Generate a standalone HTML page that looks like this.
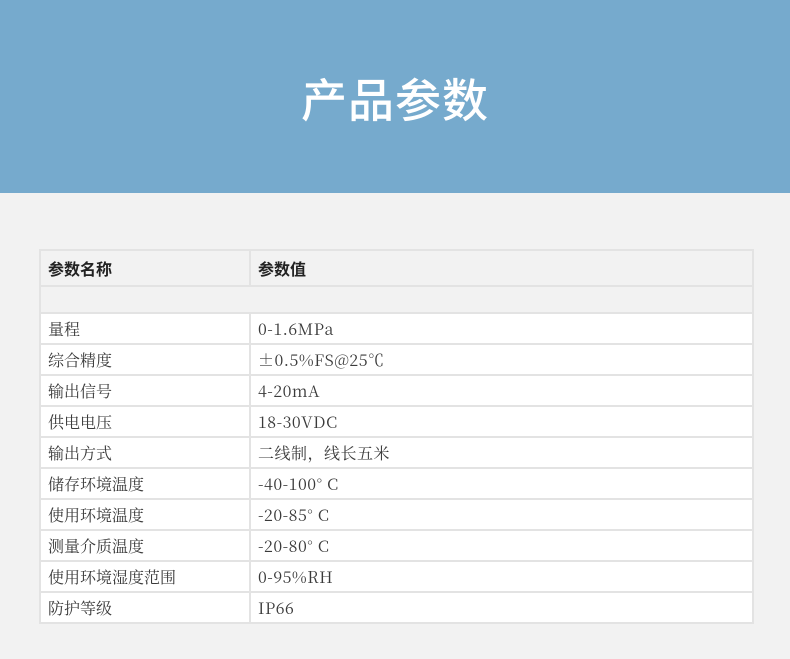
<!DOCTYPE html>
<html><head><meta charset="utf-8"><style>
html,body{margin:0;padding:0;width:790px;height:659px;background:#f2f2f2;overflow:hidden}
.top{height:193px;background:#76aacd;text-align:center;color:#fff;font-family:"Noto Sans CJK SC",sans-serif;font-size:46px;font-weight:500;line-height:196px;letter-spacing:1px}
table{position:absolute;left:39px;top:249px;width:715px;border-collapse:collapse;background:#fff;font-family:"Noto Serif CJK SC",serif;font-size:16px;color:#3a3a3a}
td{border:2px solid #e3e3e3;padding:0 0 0 7px;height:27px;box-sizing:border-box;white-space:pre}
td:first-child{width:210px}
td+td{letter-spacing:0.5px}
tr.h td{background:#f2f2f2;font-family:"Noto Sans CJK SC",sans-serif;font-weight:bold;height:36px;color:#222;letter-spacing:0}
tr.e td{background:#f2f2f2;height:27px}
tr.r td{height:31px}
</style></head><body>
<div class="top">产品参数</div>
<table>
<tr class="h"><td>参数名称</td><td>参数值</td></tr>
<tr class="e"><td colspan="2"></td></tr>
<tr class="r"><td>量程</td><td>0-1.6MPa</td></tr>
<tr class="r"><td>综合精度</td><td>±0.5%FS@25℃</td></tr>
<tr class="r"><td>输出信号</td><td>4-20mA</td></tr>
<tr class="r"><td>供电电压</td><td>18-30VDC</td></tr>
<tr class="r"><td>输出方式</td><td>二线制，线长五米</td></tr>
<tr class="r"><td>储存环境温度</td><td>-40-100° C</td></tr>
<tr class="r"><td>使用环境温度</td><td>-20-85° C</td></tr>
<tr class="r"><td>测量介质温度</td><td>-20-80° C</td></tr>
<tr class="r"><td>使用环境湿度范围</td><td>0-95%RH</td></tr>
<tr class="r"><td>防护等级</td><td>IP66</td></tr>
</table>
</body></html>
